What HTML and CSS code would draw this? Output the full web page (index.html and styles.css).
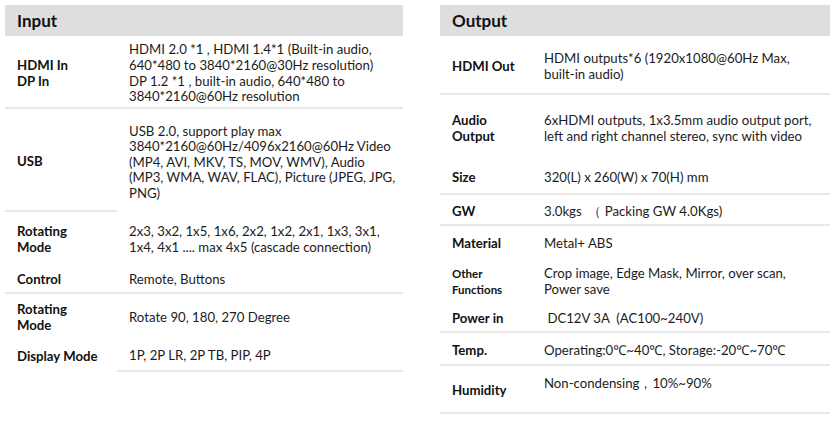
FILE: index.html
```html
<!DOCTYPE html>
<html>
<head>
<meta charset="utf-8">
<link rel="stylesheet" href="styles.css">
</head>
<body>
<div class="page">
  <section class="panel left">
    <div class="head">Input</div>
    <div class="row r-hdmi bb">
      <div class="lab">HDMI In<br>DP In</div>
      <div class="val">HDMI 2.0 *1 , HDMI 1.4*1 (Built-in audio,<br>640*480 to 3840*2160@30Hz resolution)<br>DP 1.2 *1 , built-in audio, 640*480 to<br>3840*2160@60Hz resolution</div>
    </div>
    <div class="row r-usb">
      <div class="lab bbl">USB</div>
      <div class="val">USB 2.0, support play max<br>3840*2160@60Hz/4096x2160@60Hz Video<br>(MP4, AVI, MKV, TS, MOV, WMV), Audio<br>(MP3, WMA, WAV, FLAC), Picture (JPEG, JPG,<br>PNG)</div>
    </div>
    <div class="row r-rot">
      <div class="lab">Rotating<br>Mode</div>
      <div class="val">2x3, 3x2, 1x5, 1x6, 2x2, 1x2, 2x1, 1x3, 3x1,<br>1x4, 4x1 .... max 4x5 (cascade connection)</div>
    </div>
    <div class="row r-ctl bb">
      <div class="lab">Control</div>
      <div class="val">Remote, Buttons</div>
    </div>
    <div class="row r-rot2">
      <div class="lab">Rotating<br>Mode</div>
      <div class="val">Rotate 90, 180, 270 Degree</div>
    </div>
    <div class="row r-disp">
      <div class="lab">Display Mode</div>
      <div class="val bbl">1P, 2P LR, 2P TB, PIP, 4P</div>
    </div>
  </section>
  <section class="panel right">
    <div class="head">Output</div>
    <div class="row o-hdmi bb">
      <div class="lab">HDMI Out</div>
      <div class="val">HDMI outputs*6 (1920x1080@60Hz Max,<br>built-in audio)</div>
    </div>
    <div class="row o-audio">
      <div class="lab">Audio<br>Output</div>
      <div class="val">6xHDMI outputs, 1x3.5mm audio output port,<br>left and right channel stereo, sync with video</div>
    </div>
    <div class="row o-size bb">
      <div class="lab">Size</div>
      <div class="val">320(L) x 260(W) x 70(H) mm</div>
    </div>
    <div class="row o-gw bb">
      <div class="lab">GW</div>
      <div class="val">3.0kgs &nbsp;（ Packing GW 4.0Kgs)</div>
    </div>
    <div class="row o-mat">
      <div class="lab">Material</div>
      <div class="val">Metal+ ABS</div>
    </div>
    <div class="row o-other">
      <div class="lab small">Other<br>Functions</div>
      <div class="val">Crop image, Edge Mask, Mirror, over scan,<br>Power save</div>
    </div>
    <div class="row o-power bb">
      <div class="lab">Power in</div>
      <div class="val">&nbsp;DC12V 3A &nbsp;(AC100~240V)</div>
    </div>
    <div class="row o-temp bb">
      <div class="lab">Temp.</div>
      <div class="val">Operating:0℃~40℃, Storage:-20℃~70℃</div>
    </div>
    <div class="row o-hum bb">
      <div class="lab">Humidity</div>
      <div class="val up">Non-condensing，10%~90%</div>
    </div>
  </section>
</div>
</body>
</html>
```
FILE: styles.css
```css
* { box-sizing: border-box; }
html, body { margin: 0; padding: 0; background: #fff; }
body {
  font-family: Lato, "Noto Sans", sans-serif;
  color: #1c1c1c;
  font-size: 13.2px;
  line-height: 15.6px;
}
.page {
  display: flex;
  padding: 5px 0 0 5px;
  gap: 37px;
}
.panel { display: flex; flex-direction: column; }
.left { width: 398px; }
.right { width: 390px; }
.head {
  height: 31px;
  background: #dedede;
  font-weight: 700;
  font-size: 17px;
  line-height: 31px;
  padding-left: 12px;
  color: #111;
}
.row { display: flex; align-items: stretch; }
.lab {
  font-weight: 700;
  padding: 4px 0 0 12px;
  display: flex;
  align-items: center;
  color: #111;
}
.val {
  flex: 1;
  display: flex;
  align-items: center;
  padding: 4px 0 0 12px;
}
.left .lab { width: 112px; }
.right .lab { width: 92px; }
.bb { border-bottom: 2px solid #e8e8e8; }
.bbl { border-bottom: 2px solid #e8e8e8; }
.small { font-size: 11.5px; line-height: 15.6px; }
.up { align-items: flex-start; padding-top: 10px; }

.r-hdmi { height: 73px; }
.r-usb { height: 103px; }
.r-rot { height: 51px; }
.r-ctl { height: 31px; }
.r-rot2 { height: 44px; }
.r-disp { height: 34px; }

.o-hdmi { height: 59px; }
.o-audio { height: 63px; }
.o-size { height: 37px; }
.o-gw { height: 31px; }
.o-mat { height: 32px; }
.o-other { height: 44px; }
.o-power { height: 31px; }
.o-temp { height: 33px; }
.o-hum { height: 48px; }
```
